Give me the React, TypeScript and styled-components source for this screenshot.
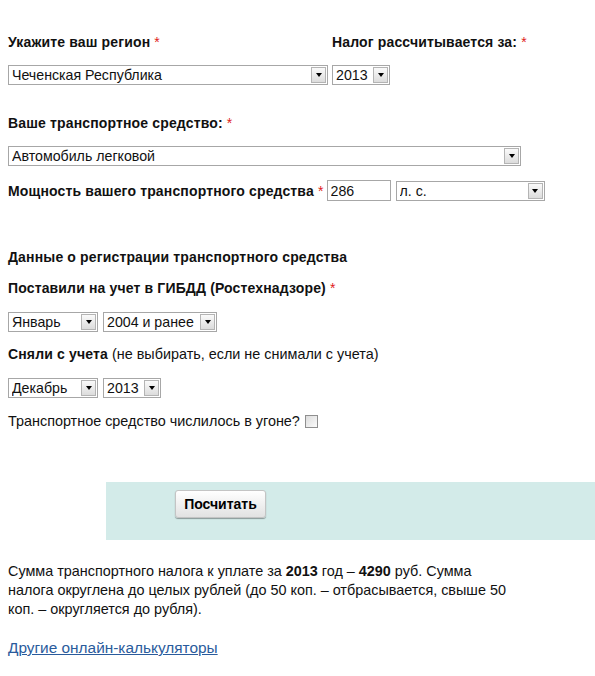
import styled, { createGlobalStyle } from "styled-components";

const GlobalStyle = createGlobalStyle`
  html, body {
    margin: 0;
    padding: 0;
    background: #fff;
  }
  body {
    font-family: "Liberation Sans", Arial, sans-serif;
    font-size: 14.4px;
    color: #111;
  }
`;

const Page = styled.div`
  width: 595px;
  padding: 32px 0 0 8px;
  box-sizing: border-box;
`;

const Row = styled.div<{ $gap?: number; $center?: boolean }>`
  display: flex;
  align-items: ${(p) => (p.$center ? "center" : "flex-end")};
  gap: ${(p) => p.$gap ?? 4}px;
`;

const Field = styled.div<{ $mb?: number }>`
  display: flex;
  flex-direction: column;
  margin-bottom: ${(p) => p.$mb ?? 0}px;
`;

const Label = styled.div<{ $mb?: number; $mt?: number }>`
  font-weight: bold;
  font-size: 14px;
  letter-spacing: 0.15px;
  line-height: 20px;
  margin-top: ${(p) => p.$mt ?? 0}px;
  margin-bottom: ${(p) => p.$mb ?? 13}px;
`;

const Star = styled.span`
  color: #e02020;
  font-weight: normal;
  margin-left: 4px;
`;

const Hint = styled.span`
  font-weight: normal;
  font-size: 14.4px;
  letter-spacing: 0;
`;

const SelectBox = styled.div<{ $w: number }>`
  width: ${(p) => p.$w}px;
  height: 20px;
  box-sizing: border-box;
  border: 1px solid #a7a7a7;
  background: #fff;
  display: flex;
  align-items: center;
  padding-right: 1px;
`;

const NativeSelect = styled.select`
  appearance: none;
  border: none;
  outline: none;
  background: transparent;
  flex: 1;
  min-width: 0;
  height: 18px;
  padding: 0 0 0 3px;
  font-family: "Liberation Sans", Arial, sans-serif;
  font-size: 14.2px;
  color: #111;
`;

const Arrow = styled.span`
  width: 15px;
  height: 16px;
  box-sizing: border-box;
  border: 1px solid #b4b4b4;
  background: linear-gradient(#fafafa, #dcdcdc);
  display: flex;
  align-items: center;
  justify-content: center;

  &::after {
    content: "";
    border-left: 3.5px solid transparent;
    border-right: 3.5px solid transparent;
    border-top: 4px solid #000;
  }
`;

const TextInput = styled.input`
  width: 64px;
  height: 21px;
  box-sizing: border-box;
  border: 1px solid #a7a7a7;
  padding: 0 3px;
  font-family: "Liberation Sans", Arial, sans-serif;
  font-size: 14.2px;
  color: #111;
  outline: none;
`;

const InlineLabel = styled(Label)`
  margin-bottom: 0;
  margin-right: 3px;
`;

const Text = styled.div`
  line-height: 20px;
  display: flex;
  align-items: center;
`;

const CheckBox = styled.span`
  width: 13px;
  height: 13px;
  box-sizing: border-box;
  border: 1px solid #8f8f8f;
  background: linear-gradient(135deg, #dcdcdc, #fbfbfb);
  margin-left: 5px;
`;

const Actions = styled.div`
  margin: 51px 0 0 98px;
  height: 58px;
  background: #d3ebe9;
  padding: 8px 0 0 69px;
  box-sizing: border-box;
`;

const Button = styled.button`
  width: 91px;
  height: 28px;
  border: 1px solid #c4c4c4;
  border-radius: 3px;
  background: linear-gradient(#ffffff, #e2e2e2);
  box-shadow: 0 1px 1px rgba(0, 0, 0, 0.35);
  font-family: "Liberation Sans", Arial, sans-serif;
  font-weight: bold;
  font-size: 14px;
  color: #000;
  cursor: pointer;
`;

const Result = styled.p`
  margin: 22px 0 0;
  width: 500px;
  line-height: 19px;
`;

const Link = styled.a`
  display: inline-block;
  margin-top: 20px;
  font-size: 15.4px;
  color: #2a5b9c;
  text-decoration: underline;
`;

function Select({ w, value }: { w: number; value: string }) {
  return (
    <SelectBox $w={w}>
      <NativeSelect defaultValue={value}>
        <option>{value}</option>
      </NativeSelect>
      <Arrow />
    </SelectBox>
  );
}

export default function App() {
  return (
    <>
      <GlobalStyle />
      <Page>
        <Row $gap={4}>
          <Field $mb={28}>
            <Label>
              Укажите ваш регион<Star>*</Star>
            </Label>
            <Select w={320} value="Чеченская Республика" />
          </Field>
          <Field $mb={28}>
            <Label>
              Налог рассчитывается за:<Star>*</Star>
            </Label>
            <Select w={58} value="2013" />
          </Field>
        </Row>

        <Field $mb={14}>
          <Label>
            Ваше транспортное средство:<Star>*</Star>
          </Label>
          <Select w={513} value="Автомобиль легковой" />
        </Field>

        <Row $gap={5}>
          <Row $gap={0} $center>
            <InlineLabel>
              Мощность вашего транспортного средства<Star>*</Star>
            </InlineLabel>
            <TextInput defaultValue="286" />
          </Row>
          <Select w={149} value="л. с." />
        </Row>

        <Label $mt={46} $mb={11}>
          Данные о регистрации транспортного средства
        </Label>

        <Field $mb={12}>
          <Label $mb={14}>
            Поставили на учет в ГИБДД (Ростехнадзоре)<Star>*</Star>
          </Label>
          <Row $gap={5}>
            <Select w={90} value="Январь" />
            <Select w={114} value="2004 и ранее" />
          </Row>
        </Field>

        <Field $mb={13}>
          <Label $mb={14}>
            Сняли с учета <Hint>(не выбирать, если не снимали с учета)</Hint>
          </Label>
          <Row $gap={5}>
            <Select w={90} value="Декабрь" />
            <Select w={58} value="2013" />
          </Row>
        </Field>

        <Text>
          Транспортное средство числилось в угоне?
          <CheckBox />
        </Text>

        <Actions>
          <Button>Посчитать</Button>
        </Actions>

        <Result>
          Сумма транспортного налога к уплате за <b>2013</b> год – <b>4290</b>{" "}
          руб. Сумма налога округлена до целых рублей (до 50 коп. –
          отбрасывается, свыше 50 коп. – округляется до рубля).
        </Result>

        <Link href="#">Другие онлайн-калькуляторы</Link>
      </Page>
    </>
  );
}
